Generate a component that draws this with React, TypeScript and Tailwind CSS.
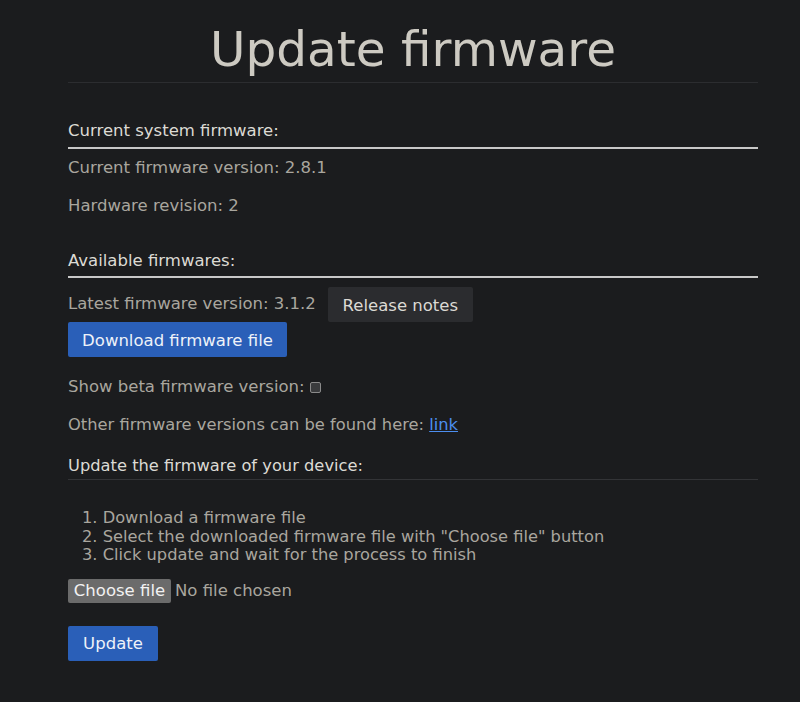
import React from "react";

export default function App() {
  return (
    <div
      className="min-h-[702px] w-full bg-[#1b1c1e] text-[16.5px] leading-[20px] text-[#a9a69e]"
      style={{ fontFamily: '"DejaVu Sans", Verdana, sans-serif' }}
    >
      <div className="mx-[68px] w-[690px]">
        <h1 className="pt-[18px] text-center text-[48.5px] leading-[62px] text-[#cdcac2]">Update firmware</h1>
        <div className="mt-[2px] h-px bg-[#2c2d30]" />

        <div className="mt-[38px] text-[#dcdad4]">Current system firmware:</div>
        <div className="mt-[6px] h-[2px] bg-[#c8c8c8]" />
        <div className="mt-[9px]">Current firmware version: 2.8.1</div>
        <div className="mt-[18px]">Hardware revision: 2</div>

        <div className="mt-[35px] text-[#dcdad4]">Available firmwares:</div>
        <div className="mt-[5px] h-[2px] bg-[#c8c8c8]" />
        <div className="mt-[9px] flex items-start">
          <span className="mt-[7px]">Latest firmware version: 3.1.2</span>
          <button className="ml-[12px] h-[35px] w-[145px] rounded-[2px] bg-[#2b2c2f] pt-[2px] text-[#dcdad4]">Release notes</button>
        </div>
        <button className="block h-[35px] w-[219px] rounded-[2px] bg-[#2a5fb8] pt-[2px] text-[#eef2f8]">Download firmware file</button>

        <div className="mt-[20px] flex items-center">
          <span>Show beta firmware version:</span>
          <span className="ml-[5px] inline-block h-[11px] w-[11px] rounded-[2px] border border-[#8a8a8a] bg-[#3a3b3d]" />
        </div>
        <div className="mt-[18px] text-[16.3px]">
          Other firmware versions can be found here: <a className="text-[#4c8ef0] underline">link</a>
        </div>

        <div className="mt-[21px] text-[16.3px] text-[#dcdad4]">Update the firmware of your device:</div>
        <div className="mt-[3px] h-px bg-[#333437]" />

        <ol className="mt-[29px] pl-[14px] text-[16.25px] leading-[18.5px]">
          <li>1. Download a firmware file</li>
          <li>2. Select the downloaded firmware file with "Choose file" button</li>
          <li>3. Click update and wait for the process to finish</li>
        </ol>

        <div className="mt-[14px] flex items-center">
          <span className="flex h-[24px] w-[103px] items-center justify-center rounded-[2px] bg-[#6b6b6b] pt-[1px] text-[#f2f2f2]">Choose file</span>
          <span className="ml-[4px] pt-[1px] text-[#a9a69e]">No file chosen</span>
        </div>

        <button className="mt-[23px] block h-[35px] w-[90px] rounded-[2px] bg-[#2a5fb8] pt-[2px] text-[#eef2f8]">Update</button>
      </div>
    </div>
  );
}
